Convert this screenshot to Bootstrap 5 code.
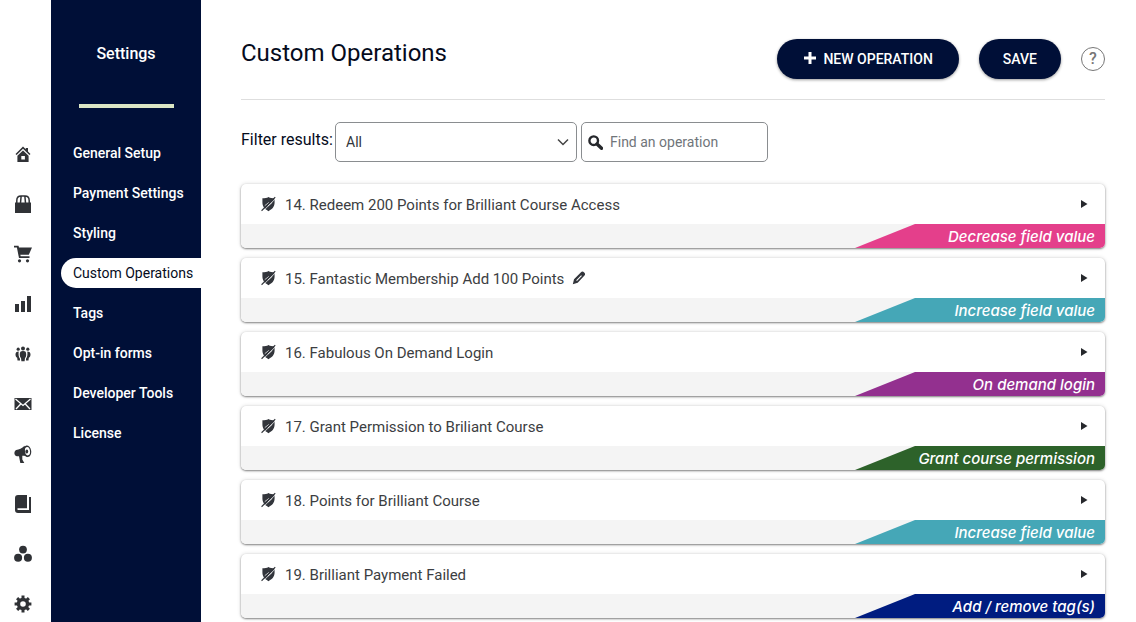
<!DOCTYPE html>
<html lang="en">
<head>
<meta charset="utf-8">
<meta name="viewport" content="width=device-width, initial-scale=1">
<title>Custom Operations</title>
<link href="https://cdn.jsdelivr.net/npm/bootstrap@5.3.0/dist/css/bootstrap.min.css" rel="stylesheet">
<style>
  :root { --navy: #000f37; --ink: #32353b; }
  body { font-family: Roboto, sans-serif; color: #050b1c; background: #fff; }
  .app { height: 100vh; overflow: hidden; }
  .rail { width: 51px; padding-top: 129px; }
  .rail a { height: 50px; padding-right: 5px; color: #303236; }
  .rail svg { width: 18px; height: 18px; fill: currentColor; }
  .settings { width: 150px; background: var(--navy); padding-top: 42px; }
  .settings h2 { font-size: 16px; line-height: 24px; font-weight: 500; margin-bottom: 38px; }
  .rule { width: 95px; height: 4px; background: #dbe6c4; margin: 0 0 30px 28px; }
  .settings .nav { gap: 10px; padding-left: 10px; }
  .settings .nav-link { color: #fff; font-size: 14px; line-height: 20px; font-weight: 500; padding: 5px 0 5px 12px; border-radius: 15px 0 0 15px; white-space: nowrap; }
  .settings .nav-link.active { background: #fff; color: #050b1c; font-weight: 400; }
  main { padding: 39px 31px 0 40px; min-width: 0; }
  .page-head { padding-bottom: 20px; border-bottom: 1px solid #dedede; margin-bottom: 22px; }
  .page-head h1 { font-size: 24px; line-height: 28px; font-weight: 400; margin: 0; }
  .actions { gap: 20px; }
  .btn-navy { --bs-btn-color: #fff; --bs-btn-bg: var(--navy); --bs-btn-hover-color: #fff; --bs-btn-hover-bg: #0a2056; --bs-btn-active-color: #fff; --bs-btn-active-bg: #0a2056;
    height: 40px; padding: 0 24px; border: 0; font-size: 14px; font-weight: 500; box-shadow: 0 1px 3px rgba(0,0,0,.4); }
  .btn-new { padding: 0 26px 0 27px; gap: 7px; }
  .btn-help { width: 24px; height: 24px; border: 1px solid #777; background: #fff; color: #777; font-size: 16px; line-height: 20px; font-weight: 500; }
  .filters { margin-bottom: 22px; gap: 4px; }
  .filters label { font-size: 16px; line-height: 36px; width: 90px; white-space: nowrap; }
  .filters .form-select, .find { height: 40px; border: 1px solid #8a8d90; border-radius: 5px; font-size: 14px; }
  .filters .form-select { width: 242px; padding: 0 36px 0 10px; color: #32353b; background-position: right 7px center; background-size: 12px; 
    background-image: url("data:image/svg+xml,%3csvg xmlns='http://www.w3.org/2000/svg' viewBox='0 0 12 12'%3e%3cpath d='M1 3.5l5 5 5-5' fill='none' stroke='%23444' stroke-width='1.5'/%3e%3c/svg%3e"); }
  .find { width: 187px; padding-left: 6px; gap: 7px; }
  .find input { font-size: 14px; padding: 0; }
  .find input::placeholder { color: #70757a; }
  .op { border: 0; border-radius: 5px; overflow: hidden; box-shadow: 0 1px 2px rgba(0,0,0,.45), 0 0 4px rgba(0,0,0,.15); color: #3c3e42; }
  .ops { gap: 10px; }
  .op-head { height: 40px; padding: 0 16px 0 20px; }
  .op-title { font-size: 15px; line-height: 20px; font-weight: 400; margin: 2px 8px 0 9px; }
  .op-foot { height: 24px; background: #f4f4f4; }
  .tag { width: 250px; padding-right: 10px; line-height: 26px; font-family: Inter, sans-serif; font-size: 15px; font-weight: 500; font-style: italic; text-align: right; color: #fff; clip-path: polygon(60px 0, 100% 0, 100% 100%, 0 100%); }
  .pink { background: #e43f8b; } .teal { background: #45a7b7; } .purple { background: #93308f; } .green { background: #2d622a; } .blue { background: #001c80; }
  .plain { border: 0; background: none; padding: 0; color: var(--ink); display: flex; }
</style>
</head>
<body>
<svg class="d-none">
  <symbol id="shield" viewBox="0 0 16 16"><path fill="#32353b" d="M8 .4C9.800 1.500 12 1.900 14.500 1.900v4.600c0 4.200-2.600 7.400-6.500 9.100C4.100 13.900 1.500 10.700 1.500 6.500V1.900C4 1.900 6.200 1.500 8 .4z"/><path d="M2 15.800L15.800 2M4 9.800l4.500-3.500M7.500 10.200l4.500-4" stroke="#fff" stroke-width=".8"/><path d="M.6 15.200L15.200.6" stroke="#32353b" stroke-width="1.200"/></symbol>
  <symbol id="pencil" viewBox="0 0 14 14"><path fill="#32353b" d="M.8 13.200L2 8.200 9 1.200c1-1 2.200-.6 3.200.3s1.300 2.100.3 3.100L5.700 11.800z"/><path d="M4.600 9.600l4.900-4.900" stroke="#fff" stroke-width="1.100"/></symbol>
  <symbol id="caret" viewBox="0 0 8 8"><path fill="#26282c" d="M1 0l6.500 4L1 8z"/></symbol>
</svg>
<div class="app d-flex">
  <nav class="rail flex-shrink-0 d-flex flex-column" aria-label="Main">
    <a href="#" aria-label="Home" class="d-flex flex-shrink-0 align-items-center justify-content-center"><svg viewBox="0 0 18 18"><path d="M9 1.500l2.800 2.700V3H14v3.400l2.500 2.500-1.100 1.100L9 3.800 2.600 10 1.500 8.900z"/><path d="M9 5.400l5.600 5.400V17H3.400v-6.200z"/><path fill="#fff" d="M7.300 11h3.600v3.500H7.300z"/></svg></a>
    <a href="#" aria-label="Products" class="d-flex flex-shrink-0 align-items-center justify-content-center"><svg viewBox="0 0 18 18"><path d="M1 7.500h16V18H1z"/><path d="M2.800 8V5.500C2.800 2.500 4.500 1 7 1h4c2.500 0 4.200 1.500 4.200 4.500V8M6.500 8l.6-6.500M11.500 8l-.6-6.500" fill="none" stroke="currentColor" stroke-width="1.500"/></svg></a>
    <a href="#" aria-label="Orders" class="d-flex flex-shrink-0 align-items-center justify-content-center"><svg viewBox="0 0 18 18"><path d="M0 .8h4.500L5 2.500h13l-3.200 7.300H6.300l.4 1.500h8.800v1.800H5L2.900 2.600H0z"/><circle cx="5.500" cy="15.800" r="1.600"/><circle cx="13.500" cy="15.800" r="1.600"/></svg></a>
    <a href="#" aria-label="Reports" class="d-flex flex-shrink-0 align-items-center justify-content-center"><svg viewBox="0 0 18 18"><path d="M1 9h4v8H1zM7 6h4v11H7zM13 1h4v16h-4z"/></svg></a>
    <a href="#" aria-label="Members" class="d-flex flex-shrink-0 align-items-center justify-content-center"><svg viewBox="0 0 18 18"><circle cx="9" cy="3.400" r="2"/><circle cx="4.200" cy="4.200" r="1.600"/><circle cx="13.800" cy="4.200" r="1.600"/><path d="M9 6c2.600 0 3.200 1 3.200 3.500 0 2-.5 3-1.200 3.500l-.4 3.200H7.400L7 13c-.7-.5-1.200-1.500-1.200-3.500C5.800 7 6.400 6 9 6zM4.700 6.500C4.300 9 4.600 12 6 13.800v1.700H3.500l-.3-2.700C2 12.200 1.500 11 1.500 9.500 1.500 7.500 2.500 6.500 4.700 6.500zM13.300 6.500c.4 2.500.1 5.500-1.300 7.300v1.700h2.500l.3-2.700c1.200-.6 1.700-1.800 1.700-3.300 0-2-1-3-3.200-3z"/></svg></a>
    <a href="#" aria-label="Email" class="d-flex flex-shrink-0 align-items-center justify-content-center"><svg viewBox="0 0 18 18"><path d="M.5 3h17v12H.5z"/><path d="M1.500 4L9 10.500 16.500 4M2 14l4.700-5M16 14l-4.700-5" fill="none" stroke="#fff" stroke-width="1.300"/></svg></a>
    <a href="#" aria-label="Campaigns" class="d-flex flex-shrink-0 align-items-center justify-content-center"><svg viewBox="0 0 18 18"><path d="M10.500.7c-2.500 3-5.500 3.500-8.300 4.300C.5 5.800-.2 8.500 1 10c1 1.600 2.700 1.400 4 1.200L6.300 18h4l-2-3.600v-3.600c2-.1 3.700.3 5.700 1.400z"/><ellipse cx="13.200" cy="6.300" rx="4" ry="5.800" transform="rotate(-8 13.200 6.300)"/><ellipse cx="13.500" cy="6.200" rx="2.500" ry="4.200" fill="#fff" transform="rotate(-8 13.500 6.200)"/><ellipse cx="12.800" cy="6.400" rx="1.400" ry="2"/></svg></a>
    <a href="#" aria-label="Courses" class="d-flex flex-shrink-0 align-items-center justify-content-center"><svg viewBox="0 0 18 18"><path d="M4 0h9v13.300H4c-1 0-1 1.600 0 1.600h11V2h2v16H4c-2 0-3-1-3-3V3c0-2 1-3 3-3z"/></svg></a>
    <a href="#" aria-label="Groups" class="d-flex flex-shrink-0 align-items-center justify-content-center"><svg viewBox="0 0 18 18"><circle cx="9" cy="4.600" r="3.900"/><circle cx="4.100" cy="12.800" r="4"/><circle cx="13.900" cy="12.800" r="4"/></svg></a>
    <a href="#" aria-label="Settings" class="d-flex flex-shrink-0 align-items-center justify-content-center"><svg viewBox="0 0 18 18"><circle cx="9" cy="9" r="4.500" fill="none" stroke="currentColor" stroke-width="3.400"/><path d="M9 .6v4M9 13.400v4M.6 9h4M13.400 9h4M3.100 3.100l2.500 2.500M12.400 12.400l2.500 2.500M3.100 14.900l2.500-2.500M12.400 5.600l2.500-2.500" stroke="currentColor" stroke-width="3"/></svg></a>
  </nav>
  <aside class="settings flex-shrink-0">
    <h2 class="text-white text-center">Settings</h2>
    <div class="rule"></div>
    <nav class="nav flex-column" aria-label="Settings">
      <a class="nav-link" href="#">General Setup</a>
      <a class="nav-link" href="#">Payment Settings</a>
      <a class="nav-link" href="#">Styling</a>
      <a class="nav-link active" aria-current="page" href="#">Custom Operations</a>
      <a class="nav-link" href="#">Tags</a>
      <a class="nav-link" href="#">Opt-in forms</a>
      <a class="nav-link" href="#">Developer Tools</a>
      <a class="nav-link" href="#">License</a>
    </nav>
  </aside>
  <main class="flex-grow-1">
    <header class="page-head d-flex align-items-start">
      <h1 class="me-auto">Custom Operations</h1>
      <div class="actions d-flex align-items-center">
        <button type="button" class="btn btn-navy btn-new rounded-pill d-flex align-items-center"><svg width="12" height="14" viewBox="0 0 12 14"><path d="M6 0v12M0 6h12" stroke="#fff" stroke-width="3"/></svg>NEW OPERATION</button>
        <button type="button" class="btn btn-navy rounded-pill">SAVE</button>
        <button type="button" class="btn btn-help rounded-circle p-0" aria-label="Help">?</button>
      </div>
    </header>
    <div class="filters d-flex">
      <label for="filter">Filter results:</label>
      <select id="filter" class="form-select"><option>All</option></select>
      <div class="find d-flex align-items-center">
        <svg class="flex-shrink-0" width="15" height="15" viewBox="0 0 15 15" fill="none" stroke="#26282c"><circle cx="5.700" cy="5.700" r="4.300" stroke-width="2.400"/><path d="M9 9l4.500 4.300" stroke-width="3.400" stroke-linecap="round"/></svg>
        <input type="search" class="form-control border-0 shadow-none bg-transparent" placeholder="Find an operation" aria-label="Find an operation">
      </div>
    </div>
    <section class="ops d-flex flex-column">
      <article class="card op"><div class="op-head d-flex align-items-center"><svg width="15" height="16"><use href="#shield"/></svg><h3 class="op-title">14. Redeem 200 Points for Brilliant Course Access</h3><button class="plain ms-auto" aria-label="Expand"><svg width="10" height="8"><use href="#caret"/></svg></button></div><div class="op-foot d-flex justify-content-end"><div class="tag pink">Decrease field value</div></div></article>
      <article class="card op"><div class="op-head d-flex align-items-center"><svg width="15" height="16"><use href="#shield"/></svg><h3 class="op-title">15. Fantastic Membership Add 100 Points</h3><button class="plain" aria-label="Rename"><svg width="14" height="14"><use href="#pencil"/></svg></button><button class="plain ms-auto" aria-label="Expand"><svg width="10" height="8"><use href="#caret"/></svg></button></div><div class="op-foot d-flex justify-content-end"><div class="tag teal">Increase field value</div></div></article>
      <article class="card op"><div class="op-head d-flex align-items-center"><svg width="15" height="16"><use href="#shield"/></svg><h3 class="op-title">16. Fabulous On Demand Login</h3><button class="plain ms-auto" aria-label="Expand"><svg width="10" height="8"><use href="#caret"/></svg></button></div><div class="op-foot d-flex justify-content-end"><div class="tag purple">On demand login</div></div></article>
      <article class="card op"><div class="op-head d-flex align-items-center"><svg width="15" height="16"><use href="#shield"/></svg><h3 class="op-title">17. Grant Permission to Briliant Course</h3><button class="plain ms-auto" aria-label="Expand"><svg width="10" height="8"><use href="#caret"/></svg></button></div><div class="op-foot d-flex justify-content-end"><div class="tag green">Grant course permission</div></div></article>
      <article class="card op"><div class="op-head d-flex align-items-center"><svg width="15" height="16"><use href="#shield"/></svg><h3 class="op-title">18. Points for Brilliant Course</h3><button class="plain ms-auto" aria-label="Expand"><svg width="10" height="8"><use href="#caret"/></svg></button></div><div class="op-foot d-flex justify-content-end"><div class="tag teal">Increase field value</div></div></article>
      <article class="card op"><div class="op-head d-flex align-items-center"><svg width="15" height="16"><use href="#shield"/></svg><h3 class="op-title">19. Brilliant Payment Failed</h3><button class="plain ms-auto" aria-label="Expand"><svg width="10" height="8"><use href="#caret"/></svg></button></div><div class="op-foot d-flex justify-content-end"><div class="tag blue">Add / remove tag(s)</div></div></article>
    </section>
  </main>
</div>
<script src="https://cdn.jsdelivr.net/npm/bootstrap@5.3.0/dist/js/bootstrap.bundle.min.js"></script>
</body>
</html>
